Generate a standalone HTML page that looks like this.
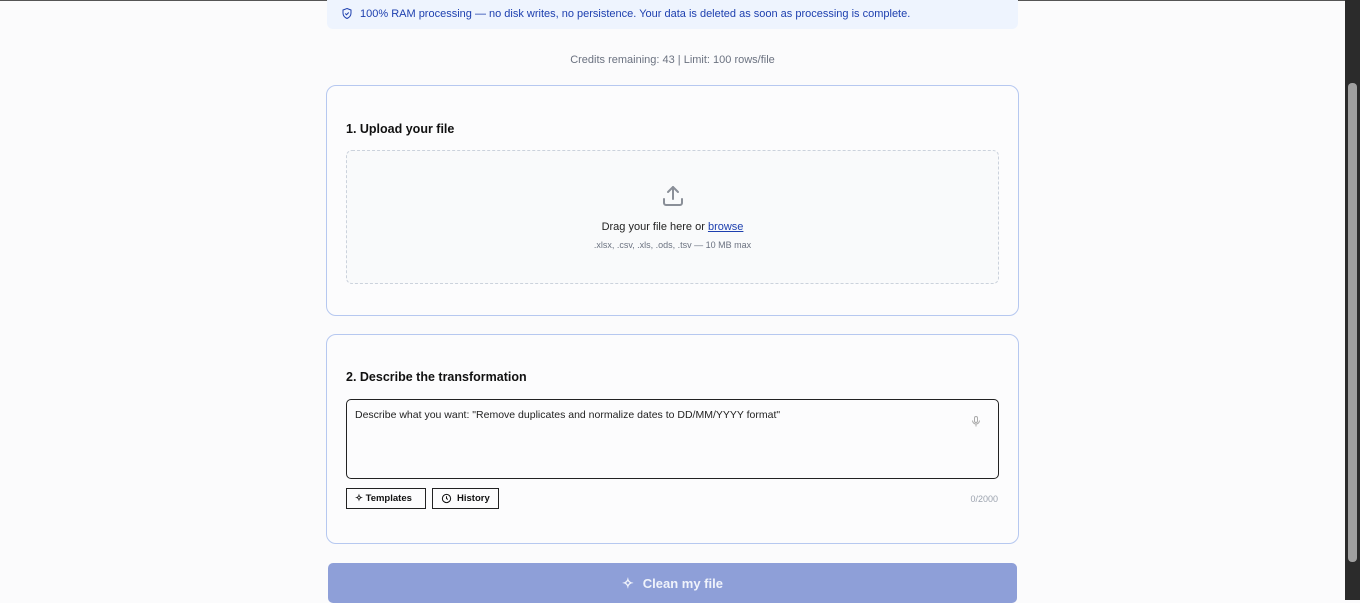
<!DOCTYPE html>
<html><head><style>
body{margin:0;width:1360px;height:600px;overflow:hidden;background:#fbfbfc;font-family:"Liberation Sans",sans-serif;position:relative}
.top{position:absolute;left:0;top:0;width:1345px;height:1px;background:#555}
.sb{position:absolute;left:1345px;top:0;width:15px;height:600px;background:#2b2b2b}
.thumb{position:absolute;left:1348px;top:83px;width:9px;height:479px;background:#a0a0a0;border-radius:4px}
.banner{position:absolute;left:327px;top:-5px;width:691px;height:34px;background:#eef4fe;border-radius:6px;color:#1e40af;font-size:11px}
.banner span{position:absolute;left:33px;top:13px}
.credits{position:absolute;left:0;width:1345px;top:54px;text-align:center;font-size:11px;color:#6b7280}
.card{position:absolute;left:326px;width:691px;border:1px solid #b6c8f0;border-radius:10px;background:#fcfcfd}
h3{position:absolute;left:19px;margin:0;font-size:12.5px;color:#111;font-weight:bold}
.drop{position:absolute;left:19px;top:64px;width:651px;height:132px;border:1px dashed #cbd2dc;border-radius:6px;background:#f9fafb;text-align:center}
.btn{position:absolute;top:153px;height:21px;border:1px solid #222;font-size:9.5px;font-weight:bold;color:#111;box-sizing:border-box;display:flex;align-items:center;gap:5px;padding:0 8px}
.go{position:absolute;left:328px;top:563px;width:689px;height:40px;background:#8e9fd8;border-radius:5px;color:#f0f3fb;font-size:13px;font-weight:bold;display:flex;align-items:center;justify-content:center;gap:9px}
</style></head><body>
<div class="top"></div>
<div class="banner"><svg style="position:absolute;left:14px;top:12px" width="12" height="13" viewBox="0 0 24 24" fill="none" stroke="#1e40af" stroke-width="2"><path d="M12 2l8 3v6c0 5-3.5 9-8 11-4.5-2-8-6-8-11V5z"/><path d="M8.5 12l2.5 2.5 4.5-4.5"/></svg><span>100% RAM processing — no disk writes, no persistence. Your data is deleted as soon as processing is complete.</span></div>
<div class="credits">Credits remaining: 43 | Limit: 100 rows/file</div>
<div class="card" style="top:85px;height:229px">
<h3 style="top:36px">1. Upload your file</h3>
<div class="drop">
<svg style="position:absolute;left:314px;top:33px" width="24" height="24" viewBox="0 0 24 24" fill="none" stroke="#8a8f98" stroke-width="2" stroke-linecap="round" stroke-linejoin="round"><path d="M21 15v4a2 2 0 0 1-2 2H5a2 2 0 0 1-2-2v-4"/><path d="M17 8l-5-5-5 5"/><path d="M12 3v12"/></svg>
<div style="position:absolute;top:70px;width:100%;font-size:11px;color:#222">Drag your file here or <span style="color:#1e40af;text-decoration:underline">browse</span></div>
<div style="position:absolute;top:89px;width:100%;font-size:9px;color:#6b7280">.xlsx, .csv, .xls, .ods, .tsv — 10 MB max</div>
</div>
</div>
<div class="card" style="top:334px;height:208px">
<h3 style="top:35px">2. Describe the transformation</h3>
<div style="position:absolute;left:19px;top:64px;width:651px;height:78px;border:1px solid #222;border-radius:5px;background:#fcfcfd">
<div style="position:absolute;left:8px;top:9px;font-size:10.5px;color:#222">Describe what you want: "Remove duplicates and normalize dates to DD/MM/YYYY format"</div>
<svg style="position:absolute;left:623px;top:14px" width="12" height="15" viewBox="0 0 24 24" fill="none" stroke="#aaa" stroke-width="2"><rect x="9" y="2" width="6" height="12" rx="3"/><path d="M5 10a7 7 0 0 0 14 0M12 17v5"/></svg>
</div>
<div class="btn" style="left:19px;width:80px">✧ Templates</div>
<div class="btn" style="left:105px;width:67px"><svg width="11" height="11" viewBox="0 0 24 24" fill="none" stroke="#111" stroke-width="2.2"><circle cx="12" cy="12" r="9"/><path d="M12 7v5l3 2"/></svg>History</div>
<div style="position:absolute;right:20px;top:159px;font-size:9px;color:#9ca3af">0/2000</div>
</div>
<div class="go"><span style="font-size:14px">✧</span>Clean my file</div>
<div class="sb"></div><div class="thumb"></div>
</body></html>
